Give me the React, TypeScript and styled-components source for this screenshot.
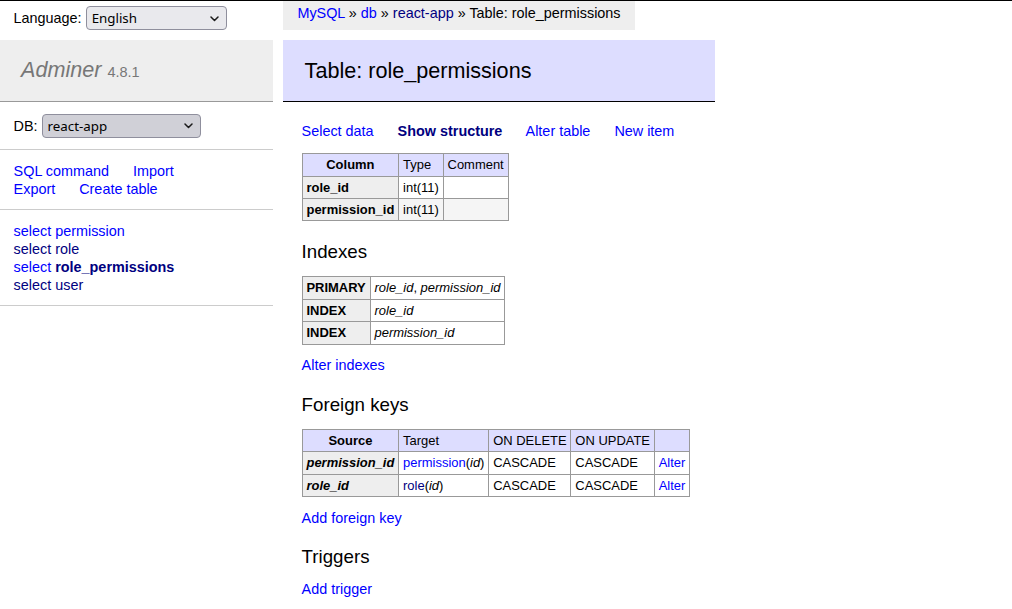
import React from "react";
import styled, { createGlobalStyle } from "styled-components";

const GlobalStyle = createGlobalStyle`
  html, body {
    margin: 0;
    padding: 0;
    background: #fff;
  }
  body {
    color: #000;
    font: 14.4px/1.25 "Liberation Sans", Arial, Helvetica, sans-serif;
  }
`;

const Page = styled.div`
  display: flex;
  align-items: flex-start;
  border-top: 1px solid #000;
  min-height: 608px;
`;

const Sidebar = styled.aside`
  width: 273px;
  flex: none;
`;

const LangBar = styled.form`
  padding: 5px 14.4px 3.64px 13.6px;
  line-height: 25.92px;
  margin: 0;
`;

const Menu = styled.nav`
  margin-top: 4.24px;
`;

const Brand = styled.h1`
  margin: 0;
  font-size: 21.6px;
  line-height: 1.25;
  font-weight: normal;
  padding: 17.28px 21.6px 17.28px 21px;
  border-bottom: 1px solid #999;
  background: #eee;
  color: #777;
`;

const BrandLink = styled.a`
  color: #777;
  font-style: italic;
  text-decoration: none;
`;

const Version = styled.span`
  font-size: 67%;
  color: #777;
`;

const MenuBlock = styled.div`
  padding: 11.52px 14.4px 11.52px 13.6px;
  margin: 0;
  border-bottom: 1px solid #ccc;
`;

const TableList = styled.ul`
  list-style: none;
  padding: 11.52px 14.4px 11.52px 13.6px;
  margin: 0;
  border-bottom: 1px solid #ccc;
`;

const Link = styled.a<{ $visited?: boolean; $active?: boolean }>`
  color: ${(p) => (p.$visited ? "navy" : "blue")};
  font-weight: ${(p) => (p.$active ? "bold" : "normal")};
  text-decoration: none;
  cursor: pointer;
`;

const LinkRow = styled.div`
  white-space: nowrap;
  & > a {
    margin-right: 20px;
  }
`;

const SelectWrap = styled.span`
  position: relative;
  display: inline-block;
  vertical-align: baseline;
`;

const NativeSelect = styled.select<{ $width: number; $bg: string }>`
  appearance: none;
  -webkit-appearance: none;
  width: ${(p) => p.$width}px;
  height: 24px;
  box-sizing: border-box;
  background: ${(p) => p.$bg};
  border: 1px solid #8f8f9d;
  border-radius: 4px;
  padding: 0 22px 0 5px;
  font: 13.33px "Noto Sans", "Open Sans", sans-serif;
  color: #000;
  vertical-align: baseline;
`;

const Chevron = styled.svg`
  position: absolute;
  right: 8px;
  top: 50%;
  margin-top: -3px;
  pointer-events: none;
`;

function Select({ value, width, bg }: { value: string; width: number; bg: string }) {
  return (
    <SelectWrap>
      <NativeSelect $width={width} $bg={bg} defaultValue={value}>
        <option value={value}>{value}</option>
      </NativeSelect>
      <Chevron width="9" height="6" viewBox="0 0 9 6">
        <path d="M1 1l3.5 3.5L8 1" fill="none" stroke="#1b1b1b" strokeWidth="1.5" strokeLinecap="round" strokeLinejoin="round" />
      </Chevron>
    </SelectWrap>
  );
}

const Main = styled.main`
  margin-left: 10px;
  display: flex;
  flex-direction: column;
  align-items: flex-start;
`;

const Breadcrumb = styled.p`
  white-space: nowrap;
  background: #eee;
  height: 28.8px;
  line-height: 25.92px;
  padding: 0 14.4px;
  margin: 0;
  box-sizing: border-box;
`;

const Content = styled.div`
  margin-top: 10px;
  width: 432px;
  padding-bottom: 20px;
`;

const Title = styled.h2`
  font-size: 21.6px;
  line-height: 1.25;
  margin: 0 0 20px;
  padding: 18px 21.6px 16.56px;
  border-bottom: 1px solid #000;
  color: #000;
  font-weight: normal;
  background: #ddf;
`;

const Body = styled.div`
  padding-left: 18.6px;
`;

const Para = styled.p`
  margin: 11.52px 20px 0 0;
  white-space: nowrap;
`;

const TopLinks = styled(Para)`
  margin-top: 0;
  & > a {
    margin-right: 20px;
  }
`;

const Heading = styled.h3`
  font-weight: normal;
  font-size: 18.72px;
  line-height: 1.25;
  margin: 18.72px 0 0;
`;

const Grid = styled.table`
  margin: 12.96px 20px 0 0;
  border-collapse: collapse;
  font-size: 12.96px;
  line-height: 1.25;
`;

const HeadCell = styled.th`
  border: 1px solid #999;
  background: #ddf;
  text-align: center;
  padding: 3px 6.48px 2.18px;
  font-weight: bold;
  white-space: nowrap;
`;

const HeadTd = styled.td`
  border: 1px solid #999;
  background: #ddf;
  padding: 3px 3.89px 2.18px;
  white-space: nowrap;
`;

const RowHead = styled.th<{ $italic?: boolean }>`
  border: 1px solid #999;
  background: #eee;
  text-align: left;
  padding: 3px 3.89px 2.18px;
  font-weight: bold;
  font-style: ${(p) => (p.$italic ? "italic" : "normal")};
  white-space: nowrap;
`;

const Cell = styled.td<{ $italic?: boolean }>`
  border: 1px solid #999;
  padding: 3px 3.89px 2.18px;
  font-style: ${(p) => (p.$italic ? "italic" : "normal")};
  white-space: nowrap;
`;

const Row = styled.tr<{ $odd?: boolean }>`
  background: ${(p) => (p.$odd ? "#f5f5f5" : "transparent")};
`;

const columns = [
  { name: "role_id", type: "int(11)" },
  { name: "permission_id", type: "int(11)" },
];

const indexes: { kind: string; cols: string[] }[] = [
  { kind: "PRIMARY", cols: ["role_id", "permission_id"] },
  { kind: "INDEX", cols: ["role_id"] },
  { kind: "INDEX", cols: ["permission_id"] },
];

const foreignKeys = [
  { source: "permission_id", table: "permission", visited: false, target: "id" },
  { source: "role_id", table: "role", visited: true, target: "id" },
];

const tables = [
  { name: "permission", visited: false, active: false },
  { name: "role", visited: true, active: false },
  { name: "role_permissions", visited: true, active: true },
  { name: "user", visited: true, active: false },
];

export default function App() {
  return (
    <>
      <GlobalStyle />
      <Page>
        <Sidebar>
          <LangBar>
            Language: <Select value="English" width={141} bg="#e9e9ed" />
          </LangBar>
          <Menu>
            <Brand>
              <BrandLink>Adminer</BrandLink> <Version>4.8.1</Version>
            </Brand>
            <MenuBlock>
              DB: <Select value="react-app" width={159} bg="#d0d0d7" />
            </MenuBlock>
            <MenuBlock>
              <LinkRow>
                <Link>SQL command</Link> <Link>Import</Link>
              </LinkRow>
              <LinkRow>
                <Link>Export</Link> <Link>Create table</Link>
              </LinkRow>
            </MenuBlock>
            <TableList>
              {tables.map((t) => (
                <li key={t.name}>
                  <Link $visited={t.visited && !t.active}>select</Link>{" "}
                  <Link $visited={t.visited} $active={t.active}>
                    {t.name}
                  </Link>
                </li>
              ))}
            </TableList>
          </Menu>
        </Sidebar>
        <Main>
          <Breadcrumb>
            <Link>MySQL</Link> » <Link>db</Link> » <Link $visited>react-app</Link> » Table: role_permissions
          </Breadcrumb>
          <Content>
            <Title>Table: role_permissions</Title>
            <Body>
              <TopLinks>
                <Link>Select data</Link> <Link $visited $active>Show structure</Link>{" "}
                <Link>Alter table</Link> <Link>New item</Link>
              </TopLinks>
              <Grid>
                <thead>
                  <tr>
                    <HeadCell>Column</HeadCell>
                    <HeadTd>Type</HeadTd>
                    <HeadTd>Comment</HeadTd>
                  </tr>
                </thead>
                <tbody>
                  {columns.map((c, i) => (
                    <Row key={c.name} $odd={i % 2 === 1}>
                      <RowHead>{c.name}</RowHead>
                      <Cell>{c.type}</Cell>
                      <Cell></Cell>
                    </Row>
                  ))}
                </tbody>
              </Grid>

              <Heading>Indexes</Heading>
              <Grid>
                <tbody>
                  {indexes.map((ix, i) => (
                    <Row key={i}>
                      <RowHead>{ix.kind}</RowHead>
                      <Cell>
                        {ix.cols.map((c, j) => (
                          <React.Fragment key={c}>
                            {j > 0 && ", "}
                            <i>{c}</i>
                          </React.Fragment>
                        ))}
                      </Cell>
                    </Row>
                  ))}
                </tbody>
              </Grid>
              <Para>
                <Link>Alter indexes</Link>
              </Para>

              <Heading>Foreign keys</Heading>
              <Grid>
                <thead>
                  <tr>
                    <HeadCell>Source</HeadCell>
                    <HeadTd>Target</HeadTd>
                    <HeadTd>ON DELETE</HeadTd>
                    <HeadTd>ON UPDATE</HeadTd>
                    <HeadTd>&nbsp;</HeadTd>
                  </tr>
                </thead>
                <tbody>
                  {foreignKeys.map((fk) => (
                    <Row key={fk.source}>
                      <RowHead $italic>{fk.source}</RowHead>
                      <Cell>
                        <Link $visited={fk.visited}>{fk.table}</Link>(<i>{fk.target}</i>)
                      </Cell>
                      <Cell>CASCADE</Cell>
                      <Cell>CASCADE</Cell>
                      <Cell>
                        <Link>Alter</Link>
                      </Cell>
                    </Row>
                  ))}
                </tbody>
              </Grid>
              <Para>
                <Link>Add foreign key</Link>
              </Para>

              <Heading>Triggers</Heading>
              <Para>
                <Link>Add trigger</Link>
              </Para>
            </Body>
          </Content>
        </Main>
      </Page>
    </>
  );
}
